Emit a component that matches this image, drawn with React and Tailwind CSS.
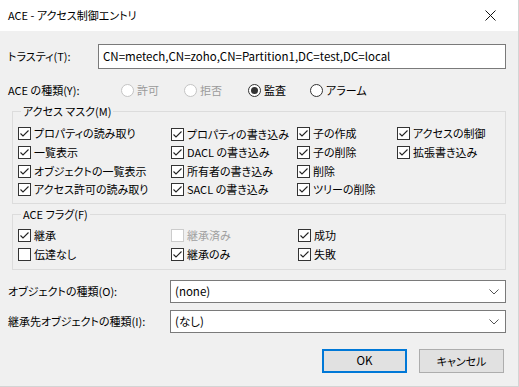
import React from 'react'

const font = "font-['Noto_Sans_CJK_JP','Noto_Sans',sans-serif] [font-feature-settings:'palt']"

const Check = ({ checked, disabled }) => (
    <span className={`flex w-[13px] h-[13px] shrink-0 items-center justify-center border bg-white ${disabled ? 'border-[#cccccc]' : 'border-[#333333]'}`}>
        { checked ?
            <svg width="11" height="11" viewBox="0 0 11 11">
                <polyline points="1.5,5.5 4,8 9.5,2.5" fill="none" stroke="#222" strokeWidth="1.1" />
            </svg>
        : null }
    </span>
)

const CheckItem = ({ label, checked = true, disabled }) => (
    <div className="flex items-center h-full">
        <Check checked={ checked } disabled={ disabled } />
        <span className={`ml-[3px] leading-none whitespace-nowrap ${disabled ? 'text-[#a0a0a0]' : 'text-black'}`}>{ label }</span>
    </div>
)

const Radio = ({ label, checked, disabled, className }) => (
    <div className={`flex items-center ${className}`}>
        <span className={`flex w-[13px] h-[13px] rounded-full border items-center justify-center bg-white ${disabled ? 'border-[#c4c4c4]' : 'border-[#333333]'}`}>
            { checked ? <span className="w-[7px] h-[7px] rounded-full bg-[#333333]"></span> : null }
        </span>
        <span className={`ml-[3px] leading-none ${disabled ? 'text-[#9a9a9a]' : 'text-black'}`}>{ label }</span>
    </div>
)

const Group = ({ title, className, children }) => (
    <div className={`relative mx-[12px] border border-[#dcdcdc] ${className}`}>
        <span className="absolute left-[8px] top-[-9px] px-[2px] bg-[#f0f0f0] leading-[16px]">{ title }</span>
        { children }
    </div>
)

const Select = ({ value }) => (
    <div className="flex items-center justify-between w-[336px] h-[23px] bg-white border border-[#7a7a7a] pl-[4px] pr-[6px]">
        <span className="leading-none text-[11.5px]">{ value }</span>
        <svg width="10" height="6" viewBox="0 0 10 6">
            <polyline points="0.5,0.5 5,5 9.5,0.5" fill="none" stroke="#555" strokeWidth="1" />
        </svg>
    </div>
)

export default () => {
    const mask = [
        ["プロパティの読み取り", "プロパティの書き込み", "子の作成", "アクセスの制御"],
        ["一覧表示", "DACL の書き込み", "子の削除", "拡張書き込み"],
        ["オブジェクトの一覧表示", "所有者の書き込み", "削除", null],
        ["アクセス許可の読み取り", "SACL の書き込み", "ツリーの削除", null],
    ]

    return (
        <div className={`w-[519px] h-[387px] flex flex-col text-[11px] text-black border-r border-b border-[#d4d4d4] ${font}`}>
            <div className="h-[31px] shrink-0 bg-white flex items-center justify-between pl-[8px] pr-[22px]">
                <span className="leading-none">ACE - アクセス制御エントリ</span>
                <svg width="11" height="11" viewBox="0 0 11 11">
                    <path d="M0.5 0.5 L10.5 10.5 M10.5 0.5 L0.5 10.5" stroke="#111" strokeWidth="1" />
                </svg>
            </div>

            <div className="flex-1 bg-[#f0f0f0] flex flex-col">
                <div className="flex items-center mt-[13px] h-[25px]">
                    <span className="w-[98px] pl-[8px] leading-none">トラスティ(T):</span>
                    <div className="w-[408px] h-[25px] bg-white border border-[#7a7a7a] flex items-center pl-[4px]">
                        <span className="leading-none text-[11.5px]">CN=metech,CN=zoho,CN=Partition1,DC=test,DC=local</span>
                    </div>
                </div>

                <div className="flex items-center h-[20px] mt-[11px]">
                    <span className="w-[121px] pl-[8px] leading-none">ACE の種類(Y):</span>
                    <Radio label="許可" disabled className="w-[63px]" />
                    <Radio label="拒否" disabled className="w-[64px]" />
                    <Radio label="監査" checked className="w-[62px]" />
                    <Radio label="アラーム" />
                </div>

                <Group title="アクセス マスク(M)" className="mt-[11px] h-[93px] pt-[12px]">
                    <div className="grid grid-cols-[153px_126px_100px_1fr] grid-rows-[19px_19px_18px_18px] pl-[5px]">
                        { mask.map((row, i) =>
                            row.map((label, j) =>
                                <div key={ `${i}-${j}` } className={ j === 1 && i === 0 ? 'pt-[2px]' : '' }>
                                    { label ? <CheckItem label={ label } /> : null }
                                </div>
                            )
                        ) }
                    </div>
                </Group>

                <Group title="ACE フラグ(F)" className="mt-[10px] h-[56px] pt-[11px]">
                    <div className="grid grid-cols-[153px_127px_1fr] grid-rows-[19px_19px] pl-[5px]">
                        <CheckItem label="継承" />
                        <CheckItem label="継承済み" checked={ false } disabled />
                        <CheckItem label="成功" />
                        <CheckItem label="伝達なし" checked={ false } />
                        <CheckItem label="継承のみ" />
                        <CheckItem label="失敗" />
                    </div>
                </Group>

                <div className="flex items-center mt-[10px]">
                    <span className="w-[170px] pl-[8px] leading-none">オブジェクトの種類(O):</span>
                    <Select value="(none)" />
                </div>
                <div className="flex items-center mt-[7px]">
                    <span className="w-[170px] pl-[8px] leading-none">継承先オブジェクトの種類(I):</span>
                    <Select value="(なし)" />
                </div>

                <div className="flex justify-end gap-[12px] mt-[16px] pr-[14px]">
                    <button className="w-[85px] h-[24px] bg-[#e1e1e1] border-2 border-[#0078d7] leading-none text-[11.5px]">OK</button>
                    <button className="w-[85px] h-[24px] bg-[#e1e1e1] border border-[#adadad] leading-none">キャンセル</button>
                </div>
            </div>
        </div>
    )
}
